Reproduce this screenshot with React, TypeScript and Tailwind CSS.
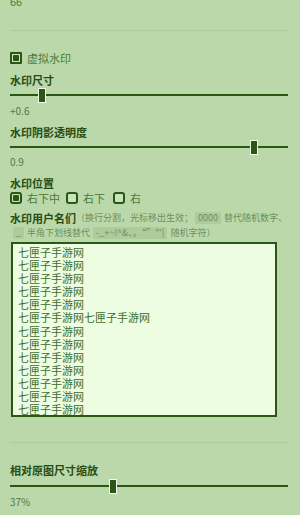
import React from "react";

const FONT = { fontFamily: '"Noto Sans CJK SC", "Noto Sans", sans-serif' };

function Slider({ left }: { left: string }) {
  return (
    <div className="relative h-[16px] w-full">
      <div className="absolute left-0 right-0 top-[7px] h-[2px] bg-[#2b5716]" />
      <div
        className={`absolute top-[0.5px] h-[15px] w-[8px] border-[1.5px] border-[#f4fbef] bg-[#2b5716] ${left}`}
      />
    </div>
  );
}

function Check({ checked, round }: { checked: boolean; round?: boolean }) {
  return (
    <div
      className={`flex h-[12px] w-[12px] shrink-0 items-center justify-center border-2 border-[#2b5716] ${
        round ? "rounded-[3px]" : "rounded-[1px]"
      } bg-[#c9e4b8]`}
    >
      {checked && <div className="h-[6px] w-[6px] rounded-[1px] bg-[#2b5716]" />}
    </div>
  );
}

const lines = [
  "七匣子手游网",
  "七匣子手游网",
  "七匣子手游网",
  "七匣子手游网",
  "七匣子手游网",
  "七匣子手游网七匣子手游网",
  "七匣子手游网",
  "七匣子手游网",
  "七匣子手游网",
  "七匣子手游网",
  "七匣子手游网",
  "七匣子手游网",
  "七匣子手游网",
  "七匣子手游网",
];

export default function App() {
  return (
    <div
      className="h-[515px] w-[300px] overflow-hidden bg-[#bbd8aa] pl-[10px] pr-[12px]"
      style={FONT}
    >
      <div className="mt-[-5px] h-[13px] text-[11px] leading-[13px] text-[#4e7a45]">66</div>
      <div className="mt-[22px] h-px bg-[#adcb9c]" />

      <div className="mt-[20px] flex h-[14px] items-center gap-[5px]">
        <Check checked />
        <span className="text-[11px] leading-[14px] text-[#4b7a36]">虚拟水印</span>
      </div>

      <div className="mt-[8px] h-[14px] text-[11px] font-bold leading-[14px] text-[#274d14]">水印尺寸</div>
      <Slider left="left-[28px]" />
      <div className="mt-[1px] h-[14px] text-[10px] leading-[14px] text-[#4e7a45]">+0.6</div>

      <div className="mt-[7px] h-[14px] text-[11px] font-bold leading-[14px] text-[#274d14]">水印阴影透明度</div>
      <Slider left="left-[240px]" />
      <div className="h-[14px] text-[10px] leading-[14px] text-[#4e7a45]">0.9</div>

      <div className="mt-[7px] h-[14px] text-[11px] font-bold leading-[14px] text-[#274d14]">水印位置</div>
      <div className="mt-[1px] flex h-[14px] items-center text-[11px] leading-[14px] text-[#4b7a36]">
        <Check checked round />
        <span className="ml-[5px]">右下中</span>
        <div className="ml-[6px]">
          <Check checked={false} round />
        </div>
        <span className="ml-[5px]">右下</span>
        <div className="ml-[8px]">
          <Check checked={false} round />
        </div>
        <span className="ml-[5px]">右</span>
      </div>

      <div className="mt-[6px] flex h-[14px] items-center whitespace-nowrap leading-[14px]">
        <span className="text-[11px] font-bold text-[#274d14]">水印用户名们</span>
        <span className="text-[9px] text-[#6b8f5c]">（换行分割，光标移出生效；</span>
        <span className="ml-[2px] rounded-[2px] bg-[#aecb9c] px-[3px] text-[9px] leading-[12px] text-[#6b8f5c]">0000</span>
        <span className="ml-[3px] text-[9px] text-[#6b8f5c]">替代随机数字、</span>
      </div>
      <div className="mt-[1px] flex h-[14px] items-center whitespace-nowrap pl-[3px] text-[9px] leading-[14px] text-[#6b8f5c]">
        <span className="rounded-[2px] bg-[#aecb9c] px-[3px] leading-[12px]">_</span>
        <span className="ml-[3px]">半角下划线替代</span>
        <span className="ml-[3px] rounded-[2px] bg-[#aecb9c] px-[3px] leading-[12px]">-_+~!^&amp;、。“”"'|</span>
        <span className="ml-[3px]">随机字符）</span>
      </div>

      <div className="ml-[1px] mt-[2px] h-[175px] w-[266px] overflow-hidden border-2 border-[#2b5716] bg-[#ecfde1] pl-[5px] pt-[2px]">
        {lines.map((l, i) => (
          <div key={i} className="h-[13.1px] whitespace-nowrap text-[11px] leading-[13.1px] text-[#3f6b2c]">
            {l}
          </div>
        ))}
      </div>

      <div className="mt-[25px] h-px bg-[#adcb9c]" />

      <div className="mt-[20px] h-[14px] text-[11px] font-bold leading-[14px] text-[#274d14]">相对原图尺寸缩放</div>
      <div className="mt-[1px]">
        <Slider left="left-[99px]" />
      </div>
      <div className="mt-[1px] h-[14px] text-[10px] leading-[14px] text-[#4e7a45]">37%</div>
    </div>
  );
}
